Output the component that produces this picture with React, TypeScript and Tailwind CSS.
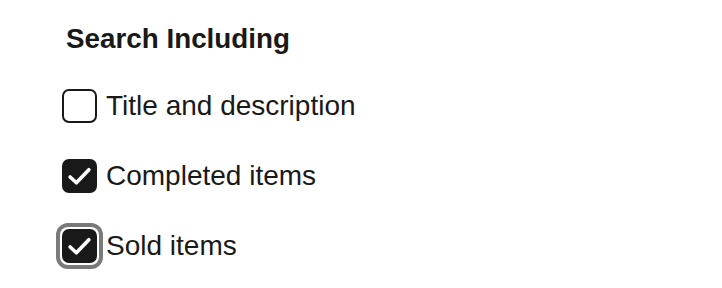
import React, { useState } from 'react'

const options = [
  { id: 'title', label: 'Title and description', checked: false, focused: false },
  { id: 'completed', label: 'Completed items', checked: true, focused: false },
  { id: 'sold', label: 'Sold items', checked: true, focused: true },
]

function Box({ checked, focused }: { checked: boolean; focused: boolean }) {
  return (
    <span
      className={`flex items-center justify-center rounded-[8px] p-[2px] ${
        focused ? 'ring-[4px] ring-[#7a7a7a]' : ''
      }`}
    >
      <span
        className={`flex h-[34px] w-[35px] items-center justify-center rounded-[7px] border-2 border-[#191919] ${
          checked ? 'bg-[#191919]' : 'bg-white'
        }`}
      >
        {checked && (
          <svg width="25" height="21" viewBox="0 0 24 20" fill="none">
            <path
              d="M3 10.5 L9 16 L21 3.5"
              stroke="white"
              strokeWidth="3.5"
              strokeLinecap="round"
              strokeLinejoin="round"
            />
          </svg>
        )}
      </span>
    </span>
  )
}

export default function App() {
  const [state, setState] = useState(options)

  return (
    <div className="h-[288px] w-[722px] bg-white pl-[60px] pt-[22px] font-['Liberation_Sans',Arial,sans-serif] text-[#191919]">
      <h2 className="pl-[6px] text-[27.8px] font-bold leading-[33px]">Search Including</h2>
      <div className="mt-[33px] flex flex-col gap-[34px]">
        {state.map((o) => (
          <label key={o.id} className="flex h-[36px] cursor-pointer items-center gap-[7px]">
            <input
              type="checkbox"
              className="sr-only"
              checked={o.checked}
              onChange={() =>
                setState((prev) =>
                  prev.map((p) => (p.id === o.id ? { ...p, checked: !p.checked } : p)),
                )
              }
            />
            <Box checked={o.checked} focused={o.focused} />
            <span className="text-[28px] leading-[34px]">{o.label}</span>
          </label>
        ))}
      </div>
    </div>
  )
}
